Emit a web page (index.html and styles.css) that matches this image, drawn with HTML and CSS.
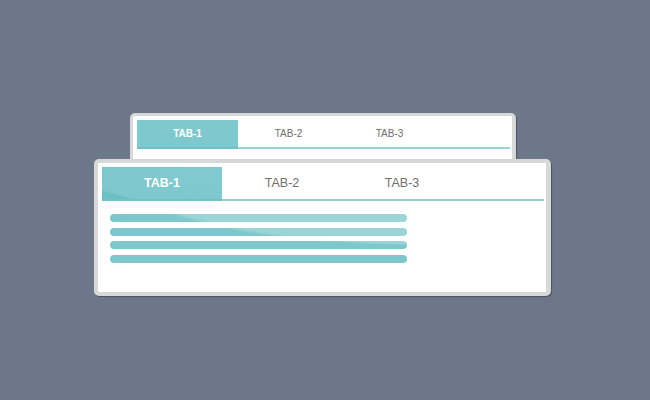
FILE: index.html
```html
<!DOCTYPE html>
<html lang="en">
<head>
    <meta charset="UTF-8">
    <meta name="viewport" content="width=device-width, initial-scale=1.0">
    <title>Tabs</title>
    <link rel="stylesheet" href="styles.css">
</head>
<body>
    <div class="stage">
        <div class="card card-back">
            <div class="tabs">
                <div class="tab active">TAB-1</div>
                <div class="tab">TAB-2</div>
                <div class="tab">TAB-3</div>
            </div>
        </div>

        <div class="card card-front">
            <div class="tabs">
                <div class="tab active">TAB-1</div>
                <div class="tab">TAB-2</div>
                <div class="tab">TAB-3</div>
            </div>
            <div class="lines">
                <div class="line"></div>
                <div class="line"></div>
                <div class="line"></div>
                <div class="line"></div>
            </div>
        </div>
    </div>
</body>
</html>
```

FILE: styles.css
```css
body {
    margin: 0;
    background-color: #6c7789;
    font-family: "Liberation Sans", Arial, sans-serif;
}

.stage {
    width: 650px;
    height: 400px;
    overflow: hidden;
}

.card {
    background-color: white;
    border-style: solid;
    border-color: #d6d9d7;
    border-radius: 5px;
    box-shadow: 1px 1px 1px rgba(0,0,0,0.3);
    box-sizing: border-box;
}

.tabs {
    display: flex;
    border-bottom: 2px solid #95d1d5;
}

.tab {
    color: #6f6f6f;
    text-align: center;
}

.tab.active {
    background-color: #7fc8ce;
    color: white;
    font-weight: bold;
    margin-bottom: -2px;
    border-bottom: 2px solid #72c1c7;
}

/* kortti takana */
.card-back {
    width: 386px;
    height: 51px;
    margin: 113px 0 0 130px;
    border-width: 3px 4px 3px 3px;
    padding: 4px 2px 0 4px;
}

.card-back .tab {
    width: 101px;
    height: 27px;
    line-height: 28px;
    font-size: 10px;
}

.card-back .tab.active {
    height: 27px;
}

/* kortti edessä */
.card-front {
    position: relative;
    width: 457px;
    margin: -5px 0 0 94px;
    border-width: 4px 5px 4px 4px;
    padding: 4px 2px 29px 4px;
}

.card-front .tab {
    width: 120px;
    height: 32px;
    line-height: 33px;
    font-size: 12.5px;
}

.card-front .tab.active {
    height: 32px;
    background: linear-gradient(196deg, #82cad0 0%, #7dc7cd 86%, #6cbfc5 88%);
}

.lines {
    display: flex;
    flex-direction: column;
    gap: 5.5px;
    width: 297px;
    margin: 13px 0 0 8px;
}

.line {
    height: 8px;
    border-radius: 4px;
    background-color: #7ec8cd;
    background-image: radial-gradient(ellipse 325px 72px at 330px -40px, #9dd5d8 0%, #9bd4d7 97%, rgba(126,200,205,0) 100%);
    background-size: 297px 48px;
    background-repeat: no-repeat;
}

.line:nth-child(1) { background-position: 0 0; }
.line:nth-child(2) { background-position: 0 -13.5px; }
.line:nth-child(3) { background-position: 0 -27px; }
.line:nth-child(4) { background-position: 0 -40.5px; }
```
